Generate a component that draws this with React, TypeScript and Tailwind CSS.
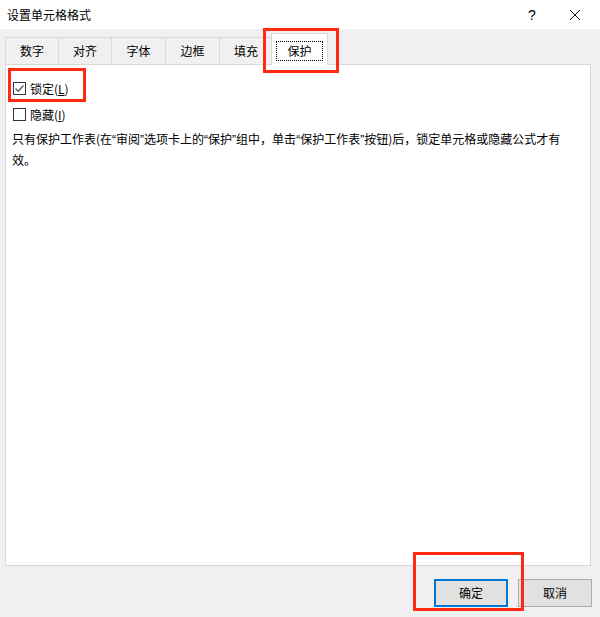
import React from "react";

const tabs = ["数字", "对齐", "字体", "边框", "填充"];

function CheckBox({ checked }: { checked?: boolean }) {
  return (
    <span className="w-[13px] h-[13px] border border-[#333333] bg-white flex items-center justify-center shrink-0">
      {checked && (
        <svg width="11" height="11" viewBox="0 0 11 11">
          <path d="M1.5 5.5 L4.2 8.2 L9.5 2.5" fill="none" stroke="#5a5a5a" strokeWidth="1.3" />
        </svg>
      )}
    </span>
  );
}

// narrow western quote marks, as the dialog's font draws them
function Q({ c }: { c: string }) {
  return <span style={{ fontFamily: '"Liberation Sans", sans-serif' }}>{c}</span>;
}

export default function App() {
  return (
    <div
      className="relative w-[600px] h-[617px] bg-[#f0f0f0] text-[12px] text-black overflow-hidden"
      style={{ fontFamily: '"Noto Sans CJK SC", "Noto Sans", sans-serif' }}
    >
      {/* Title bar */}
      <div className="h-[29px] bg-white flex items-center pl-[7px]">
        <span className="flex-1 leading-none">设置单元格格式</span>
        <span className="w-[12px] text-center text-[14px] leading-none mr-[31px]" style={{ fontFamily: '"Liberation Sans", sans-serif' }}>?</span>
        <svg width="12" height="12" viewBox="0 0 12 12" className="mr-[19px]">
          <path d="M1 1 L11 11 M11 1 L1 11" stroke="#111" strokeWidth="1" />
        </svg>
      </div>

      {/* Tabs */}
      <div className="mt-[4px] pl-[5px] flex items-end h-[31px]">
        {tabs.map((t, i) => (
          <div
            key={t}
            className={
              "h-[27px] flex items-center justify-center border-t border-l border-[#d9d9d9] bg-[#f0f0f0] " +
              (i === 2 || i === 3 ? "w-[54px]" : "w-[53px]")
            }
          >
            {t}
          </div>
        ))}
        <div className="relative z-10 -mb-px -ml-px h-[32px] w-[57px] bg-white border border-b-0 border-[#d9d9d9] flex items-center justify-center">
          <span className="border border-dotted border-black px-[10px] h-[20px] mt-[2px] flex items-center">保护</span>
        </div>
      </div>

      {/* Panel */}
      <div className="ml-[5px] w-[586px] h-[502px] bg-white border border-[#d9d9d9] pt-[17px] pl-[7px]">
        <div className="flex items-center gap-[4px] h-[13px]">
          <CheckBox checked />
          <span className="leading-none">
            锁定(<span className="underline">L</span>)
          </span>
        </div>
        <div className="flex items-center gap-[4px] h-[13px] mt-[13px]">
          <CheckBox />
          <span className="leading-none">
            隐藏(<span className="underline">I</span>)
          </span>
        </div>
        <p className="mt-[8px] -ml-[1px] leading-[19px] whitespace-nowrap">
          只有保护工作表(在<Q c="“" />审阅<Q c="”" />选项卡上的<Q c="“" />保护<Q c="”" />组中，单击<Q c="“" />保护工作表<Q c="”" />按钮)后，锁定单元格或隐藏公式才有
          <br />
          效。
        </p>
      </div>

      {/* Buttons */}
      <div className="flex justify-end gap-[10px] pr-[8px] mt-[13px]">
        <button className="w-[74px] h-[28px] bg-[#e1e1e1] border-2 border-[#0078d7] text-[12px]">确定</button>
        <button className="w-[74px] h-[28px] bg-[#e1e1e1] border border-[#adadad] text-[12px]">取消</button>
      </div>

      {/* Red highlight boxes */}
      <div className="absolute left-[8px] top-[68px] w-[78px] h-[34px] border-[3px] border-[#ff2a12]" />
      <div className="absolute left-[263px] top-[28px] w-[76px] h-[45px] border-[3px] border-[#ff2a12]" />
      <div className="absolute left-[413px] top-[552px] w-[111px] h-[59px] border-[3px] border-[#ff2a12]" />
    </div>
  );
}
